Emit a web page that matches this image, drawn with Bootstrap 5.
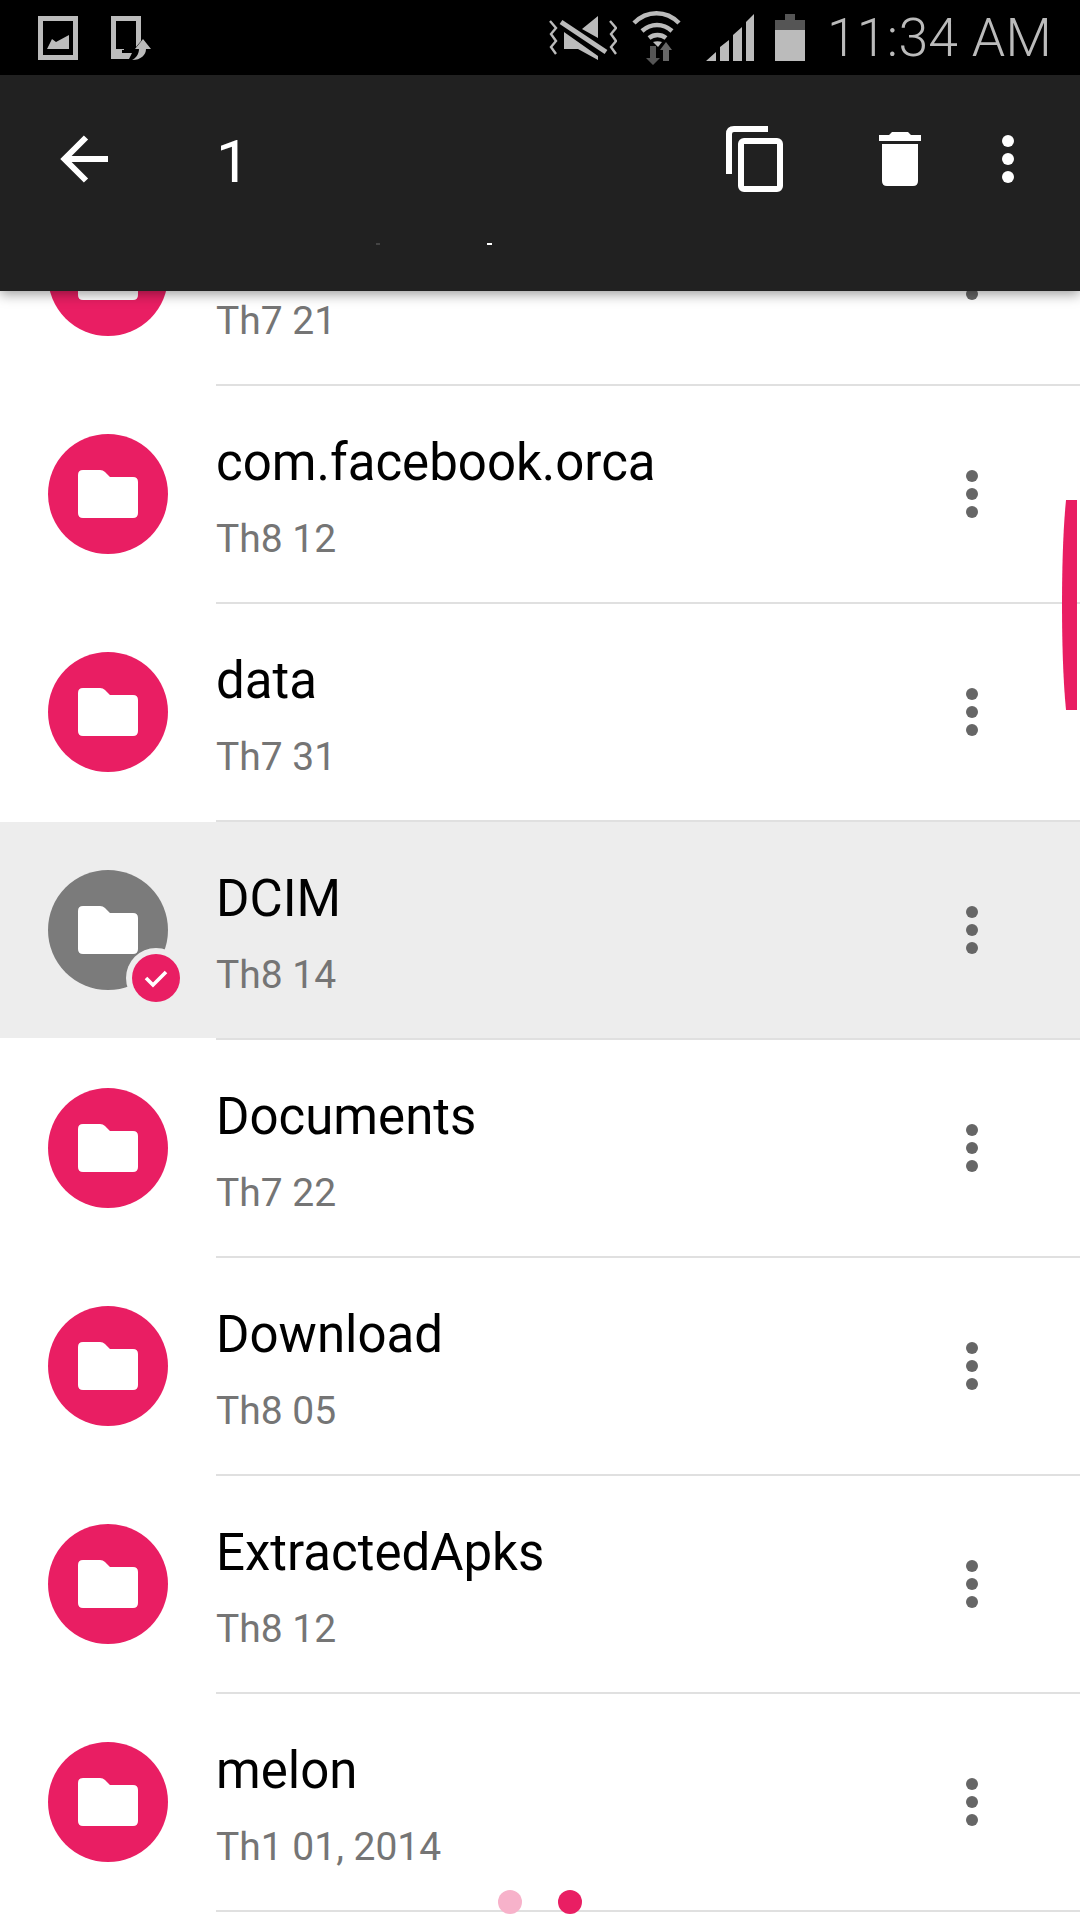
<!DOCTYPE html>
<html lang="vi">
<head>
<meta charset="utf-8">
<title>Files</title>
<link href="https://cdn.jsdelivr.net/npm/bootstrap@5.3.0/dist/css/bootstrap.min.css" rel="stylesheet">
<style>
html,body{background:#fff}
.screen{width:1080px;height:1920px;overflow:hidden;font-family:Roboto,"Liberation Sans",sans-serif;position:relative}
.status-strip{height:75px;background:#000;color:#bbb;padding:0 28px 0 38px;position:relative;z-index:3}
.device-ico{margin-left:33px}
.wifi-ico{margin-left:14px}
.signal-ico{margin-left:23px}
.battery-ico{margin-left:21px}
.clock{font-size:53.5px;font-weight:300;line-height:75px;letter-spacing:.3px;margin-left:22px}
.action-strip{height:216px;background:#212121;color:#fff;position:relative;z-index:2;box-shadow:0 3px 12px rgba(0,0,0,.4);padding:60px 0 0 58px}
.count{font-size:60px;font-weight:400;line-height:52px;margin:1px 0 0 106px;width:30px}
.actions{margin-left:auto;padding-right:66px}
.copy-ico{margin-top:-11px}
.trash-ico{margin-left:94px;margin-top:-4px}
.actions .more-dots{margin:0 0 0 81px}
.file-list{margin-top:-123px;border-radius:0;position:relative;z-index:1}
.file-row{height:218px;padding:0;border:0;border-radius:0!important;background:#fff}
.file-row.picked{background:linear-gradient(#ededed 0,#ededed 216px,#fff 216px)}
.avatar{width:120px;height:120px;background:#e91e63;margin:0 49px 0 48px;position:relative;flex:none;top:-1px}
.picked .avatar{background:#7b7b7b}
.tick{position:absolute;right:-18px;bottom:-18px;width:60px;height:60px;border-radius:50%;background:#ededed}
.tick-in{width:48px;height:48px;background:#e91e63}
.row-body{height:100%;border-bottom:2px solid #e0e0e0;padding-right:102px;margin-left:-1px}
.file-name{font-size:51px;line-height:60px;color:#000;margin-top:6px}
.file-date{font-size:39px;line-height:46px;color:#757575;margin-top:23px}
.more-dots{flex:none;width:12px;gap:6px}
.dot-one{width:12px;height:12px;background:#666;display:block}
.actions .dot-one{background:#fff}
.scroll-thumb{position:absolute;left:1062px;top:500px;z-index:1}
.page-dots{position:absolute;left:498px;top:1890px;gap:36px;z-index:1}
.page-dot{width:24px;height:24px;background:#e91e63}
.page-dot.dim{background:#f7b2ca}
.glint{position:absolute;height:2px;background:#fff;top:168px}
.glint.a{left:487px;width:5px}
.glint.b{left:376px;width:4px;background:#444}
</style>
</head>
<body>
<div class="screen">
  <div class="status-strip d-flex align-items-center">
    <svg width="40" height="44" viewBox="38 14 40 44"><path fill="#bbb" fill-rule="evenodd" d="M38 14h40v44H38zM43 19v34h30V19z"/><path fill="#bbb" d="M47 47l5-10 4 3 13-7v14z"/></svg>
    <svg class="device-ico" width="41" height="44" viewBox="111 14 41 44"><path fill="#bbb" fill-rule="evenodd" d="M111 14h30v25l-5 6V19h-20v28h8v4h8l-3 6h-18z"/><path fill="#000" d="M122 48h12v3h-12z"/><path fill="#bbb" d="M143 37l8 10h-5c0 6-5 11-14 11 4-2 7-6 7-11h-4z"/></svg>
    <div class="ms-auto d-flex align-items-center">
      <svg width="70" height="46" viewBox="548 13 70 46"><g fill="none" stroke="#bbb" stroke-width="2.400"><path d="M551 19l6 7-5 6 5 7-5 6 5 7"/><path d="M611 19l6 7-5 6 5 7-5 6 5 7"/></g><path fill="#bbb" d="M599 14v22l-16-9zM565 30l34 24v4l-20-11h-14z"/><path stroke="#bbb" stroke-width="5" d="M562 20l45 30"/></svg>
      <svg class="wifi-ico" width="52" height="56" viewBox="632 7 52 56"><g fill="none" stroke="#bbb" stroke-width="4.500"><path d="M635 20c13-13 32-13 45 0"/><path d="M643 28c9-8 21-8 30 0"/><path d="M650 35c5-4 12-4 17 0"/></g><path fill="#bbb" d="M654 39c3-1 6-1 9 0l-4 5z"/><path fill="#555" d="M651 43h6v12h4l-7 7-7-7h4z"/><path fill="#666" d="M664 58V47h-3l6-8 6 8h-3v11z"/></svg>
      <svg class="signal-ico" width="48" height="48" viewBox="707 12 48 48"><path fill="#bbb" d="M707 59l10-9v9zM721 45l9-7v21h-9zM734 33l9-8v34h-9zM747 20l8-8v47h-8z"/></svg>
      <svg class="battery-ico" width="30" height="48" viewBox="776 11 30 48"><path fill="#555" d="M786 11h10v6h10v10h-30v-10h10z"/><path fill="#bbb" d="M776 27h30v31h-30z"/></svg>
      <span class="clock">11:34 AM</span>
    </div>
  </div>
  <div class="action-strip d-flex align-items-start">
    <svg width="52" height="48" viewBox="58 135 52 48"><path fill="none" stroke="#fff" stroke-width="6" d="M108 159H66M86 137.500L64.500 159 86 180.500"/></svg>
    <span class="count">1</span>
    <div class="actions d-flex align-items-start">
      <svg class="copy-ico" width="61" height="70" viewBox="724 124 61 70"><path fill="none" stroke="#fff" stroke-width="6" d="M768 129h-34q-5 0-5 5v40"/><rect x="741" y="141" width="39" height="48" rx="3" fill="none" stroke="#fff" stroke-width="6"/></svg>
      <svg class="trash-ico" width="42" height="56" viewBox="879 131 42 56"><path fill="#fff" d="M879 135h10l3-3h16l3 3h10v6h-42zM882 144h36v37q0 5-5 5h-26q-5 0-5-5z"/></svg>
      <div class="more-dots d-flex flex-column"><i class="dot-one rounded-circle"></i><i class="dot-one rounded-circle"></i><i class="dot-one rounded-circle"></i></div>
    </div>
    <span class="glint a"></span><span class="glint b"></span>
  </div>
  <ul class="list-group file-list">
    <li class="list-group-item file-row d-flex align-items-center">
      <div class="avatar rounded-circle d-flex align-items-center justify-content-center"><svg width="60" height="48" viewBox="0 0 60 48"><path fill="#fff" d="M5 0h17q3 0 5 2l5 5h23q5 0 5 5v31q0 5-5 5H5q-5 0-5-5V5q0-5 5-5z"/></svg></div>
      <div class="row-body flex-grow-1 d-flex align-items-center justify-content-between"><div><div class="file-name">&nbsp;</div><div class="file-date">Th7 21</div></div><div class="more-dots d-flex flex-column"><i class="dot-one rounded-circle"></i><i class="dot-one rounded-circle"></i><i class="dot-one rounded-circle"></i></div></div>
    </li>
    <li class="list-group-item file-row d-flex align-items-center">
      <div class="avatar rounded-circle d-flex align-items-center justify-content-center"><svg width="60" height="48" viewBox="0 0 60 48"><path fill="#fff" d="M5 0h17q3 0 5 2l5 5h23q5 0 5 5v31q0 5-5 5H5q-5 0-5-5V5q0-5 5-5z"/></svg></div>
      <div class="row-body flex-grow-1 d-flex align-items-center justify-content-between"><div><div class="file-name">com.facebook.orca</div><div class="file-date">Th8 12</div></div><div class="more-dots d-flex flex-column"><i class="dot-one rounded-circle"></i><i class="dot-one rounded-circle"></i><i class="dot-one rounded-circle"></i></div></div>
    </li>
    <li class="list-group-item file-row d-flex align-items-center">
      <div class="avatar rounded-circle d-flex align-items-center justify-content-center"><svg width="60" height="48" viewBox="0 0 60 48"><path fill="#fff" d="M5 0h17q3 0 5 2l5 5h23q5 0 5 5v31q0 5-5 5H5q-5 0-5-5V5q0-5 5-5z"/></svg></div>
      <div class="row-body flex-grow-1 d-flex align-items-center justify-content-between"><div><div class="file-name">data</div><div class="file-date">Th7 31</div></div><div class="more-dots d-flex flex-column"><i class="dot-one rounded-circle"></i><i class="dot-one rounded-circle"></i><i class="dot-one rounded-circle"></i></div></div>
    </li>
    <li class="list-group-item file-row picked d-flex align-items-center">
      <div class="avatar rounded-circle d-flex align-items-center justify-content-center"><svg width="60" height="48" viewBox="0 0 60 48"><path fill="#fff" d="M5 0h17q3 0 5 2l5 5h23q5 0 5 5v31q0 5-5 5H5q-5 0-5-5V5q0-5 5-5z"/></svg>
        <span class="tick d-flex align-items-center justify-content-center"><span class="tick-in rounded-circle d-flex align-items-center justify-content-center"><svg width="24" height="20" viewBox="0 0 24 20"><path fill="none" stroke="#fff" stroke-width="3.600" d="M2 10l7 7L22 4"/></svg></span></span></div>
      <div class="row-body flex-grow-1 d-flex align-items-center justify-content-between"><div><div class="file-name">DCIM</div><div class="file-date">Th8 14</div></div><div class="more-dots d-flex flex-column"><i class="dot-one rounded-circle"></i><i class="dot-one rounded-circle"></i><i class="dot-one rounded-circle"></i></div></div>
    </li>
    <li class="list-group-item file-row d-flex align-items-center">
      <div class="avatar rounded-circle d-flex align-items-center justify-content-center"><svg width="60" height="48" viewBox="0 0 60 48"><path fill="#fff" d="M5 0h17q3 0 5 2l5 5h23q5 0 5 5v31q0 5-5 5H5q-5 0-5-5V5q0-5 5-5z"/></svg></div>
      <div class="row-body flex-grow-1 d-flex align-items-center justify-content-between"><div><div class="file-name">Documents</div><div class="file-date">Th7 22</div></div><div class="more-dots d-flex flex-column"><i class="dot-one rounded-circle"></i><i class="dot-one rounded-circle"></i><i class="dot-one rounded-circle"></i></div></div>
    </li>
    <li class="list-group-item file-row d-flex align-items-center">
      <div class="avatar rounded-circle d-flex align-items-center justify-content-center"><svg width="60" height="48" viewBox="0 0 60 48"><path fill="#fff" d="M5 0h17q3 0 5 2l5 5h23q5 0 5 5v31q0 5-5 5H5q-5 0-5-5V5q0-5 5-5z"/></svg></div>
      <div class="row-body flex-grow-1 d-flex align-items-center justify-content-between"><div><div class="file-name">Download</div><div class="file-date">Th8 05</div></div><div class="more-dots d-flex flex-column"><i class="dot-one rounded-circle"></i><i class="dot-one rounded-circle"></i><i class="dot-one rounded-circle"></i></div></div>
    </li>
    <li class="list-group-item file-row d-flex align-items-center">
      <div class="avatar rounded-circle d-flex align-items-center justify-content-center"><svg width="60" height="48" viewBox="0 0 60 48"><path fill="#fff" d="M5 0h17q3 0 5 2l5 5h23q5 0 5 5v31q0 5-5 5H5q-5 0-5-5V5q0-5 5-5z"/></svg></div>
      <div class="row-body flex-grow-1 d-flex align-items-center justify-content-between"><div><div class="file-name">ExtractedApks</div><div class="file-date">Th8 12</div></div><div class="more-dots d-flex flex-column"><i class="dot-one rounded-circle"></i><i class="dot-one rounded-circle"></i><i class="dot-one rounded-circle"></i></div></div>
    </li>
    <li class="list-group-item file-row d-flex align-items-center">
      <div class="avatar rounded-circle d-flex align-items-center justify-content-center"><svg width="60" height="48" viewBox="0 0 60 48"><path fill="#fff" d="M5 0h17q3 0 5 2l5 5h23q5 0 5 5v31q0 5-5 5H5q-5 0-5-5V5q0-5 5-5z"/></svg></div>
      <div class="row-body flex-grow-1 d-flex align-items-center justify-content-between"><div><div class="file-name">melon</div><div class="file-date">Th1 01, 2014</div></div><div class="more-dots d-flex flex-column"><i class="dot-one rounded-circle"></i><i class="dot-one rounded-circle"></i><i class="dot-one rounded-circle"></i></div></div>
    </li>
  </ul>
  <svg class="scroll-thumb" width="16" height="211" viewBox="0 0 16 211"><path fill="#e91e63" d="M4 0h11v210H4C1 180 0 140 0 105 0 70 1 30 4 0z"/></svg>
  <div class="page-dots d-flex"><span class="page-dot dim rounded-circle"></span><span class="page-dot rounded-circle"></span></div>
</div>
<script src="https://cdn.jsdelivr.net/npm/bootstrap@5.3.0/dist/js/bootstrap.bundle.min.js"></script>
</body>
</html>
